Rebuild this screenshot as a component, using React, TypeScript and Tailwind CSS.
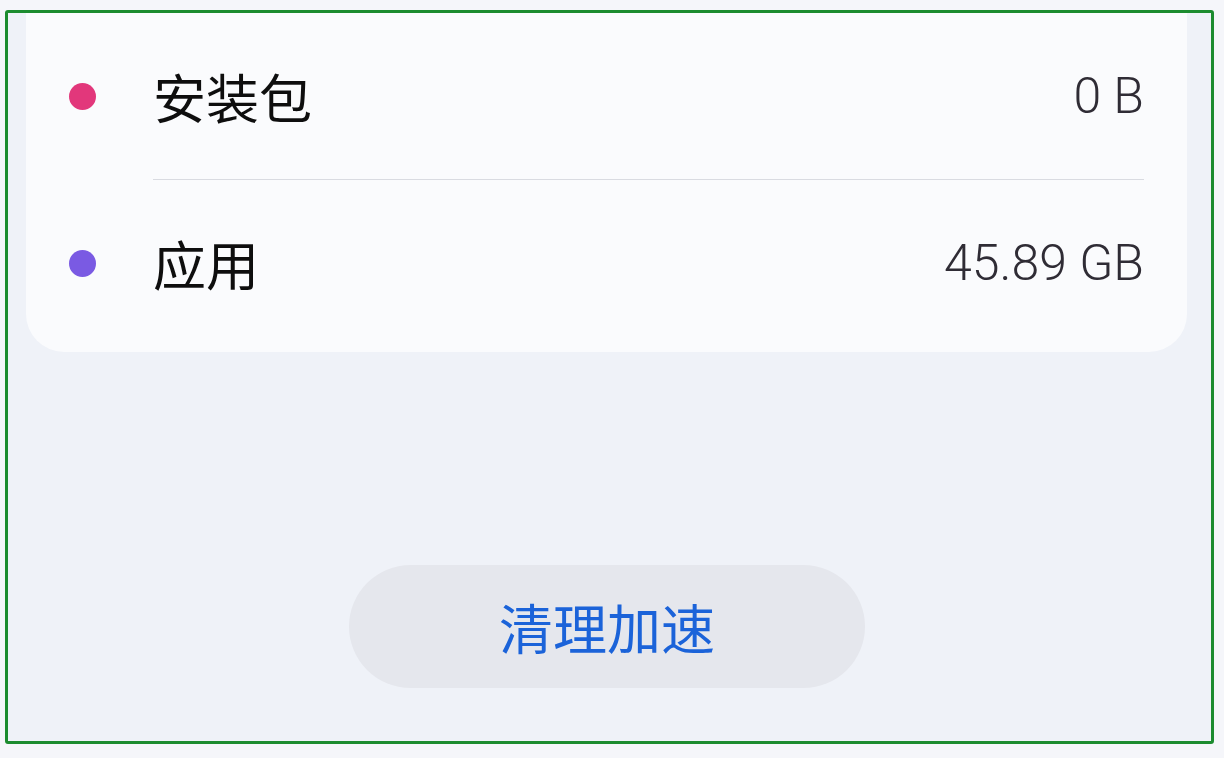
const cjk = "font-['Noto_Sans_CJK_SC','Noto_Sans',sans-serif]";
const num = "font-['Roboto','Noto_Sans',sans-serif]";

const rows = [
  { name: "安装包", value: "0 B", dot: "bg-[#e2377b]" },
  { name: "应用", value: "45.89 GB", dot: "bg-[#7a5ae3]" },
];

export default function App() {
  return (
    <div className="w-[1224px] h-[758px] bg-[#f5f6fa] pt-[10px] pl-[5px] overflow-hidden">
      <div className="w-[1209px] h-[734px] border-[3px] border-[#1c8c2f] rounded-[3px] bg-[#eff2f8] flex flex-col overflow-hidden">
        {/* storage card */}
        <div className="ml-[18px] w-[1161px] h-[339px] bg-[#fafbfd] rounded-b-[38px] pl-[43px] pr-[43px] flex flex-col">
          {rows.map((row, i) => (
            <div key={row.name} className="flex flex-col">
              {i > 0 && <div className="ml-[84px] h-px bg-[#d9dbe1]" />}
              <div className="h-[166px] flex items-center">
                <div className={`w-[27px] h-[27px] rounded-full ${row.dot}`} />
                <div className={`ml-[57px] text-[53px] leading-none text-[#0e0e0e] ${cjk}`}>
                  {row.name}
                </div>
                <div className={`ml-auto text-[50px] leading-none font-light text-[#2f2c35] ${num}`}>
                  {row.value}
                </div>
              </div>
            </div>
          ))}
        </div>

        {/* action button */}
        <div className="mt-[213px] ml-[341px] w-[516px] h-[123px] rounded-full bg-[#e5e7ed] flex items-center justify-center">
          <span className={`text-[54px] leading-none text-[#1b63d9] ${cjk}`}>清理加速</span>
        </div>
      </div>
    </div>
  );
}
